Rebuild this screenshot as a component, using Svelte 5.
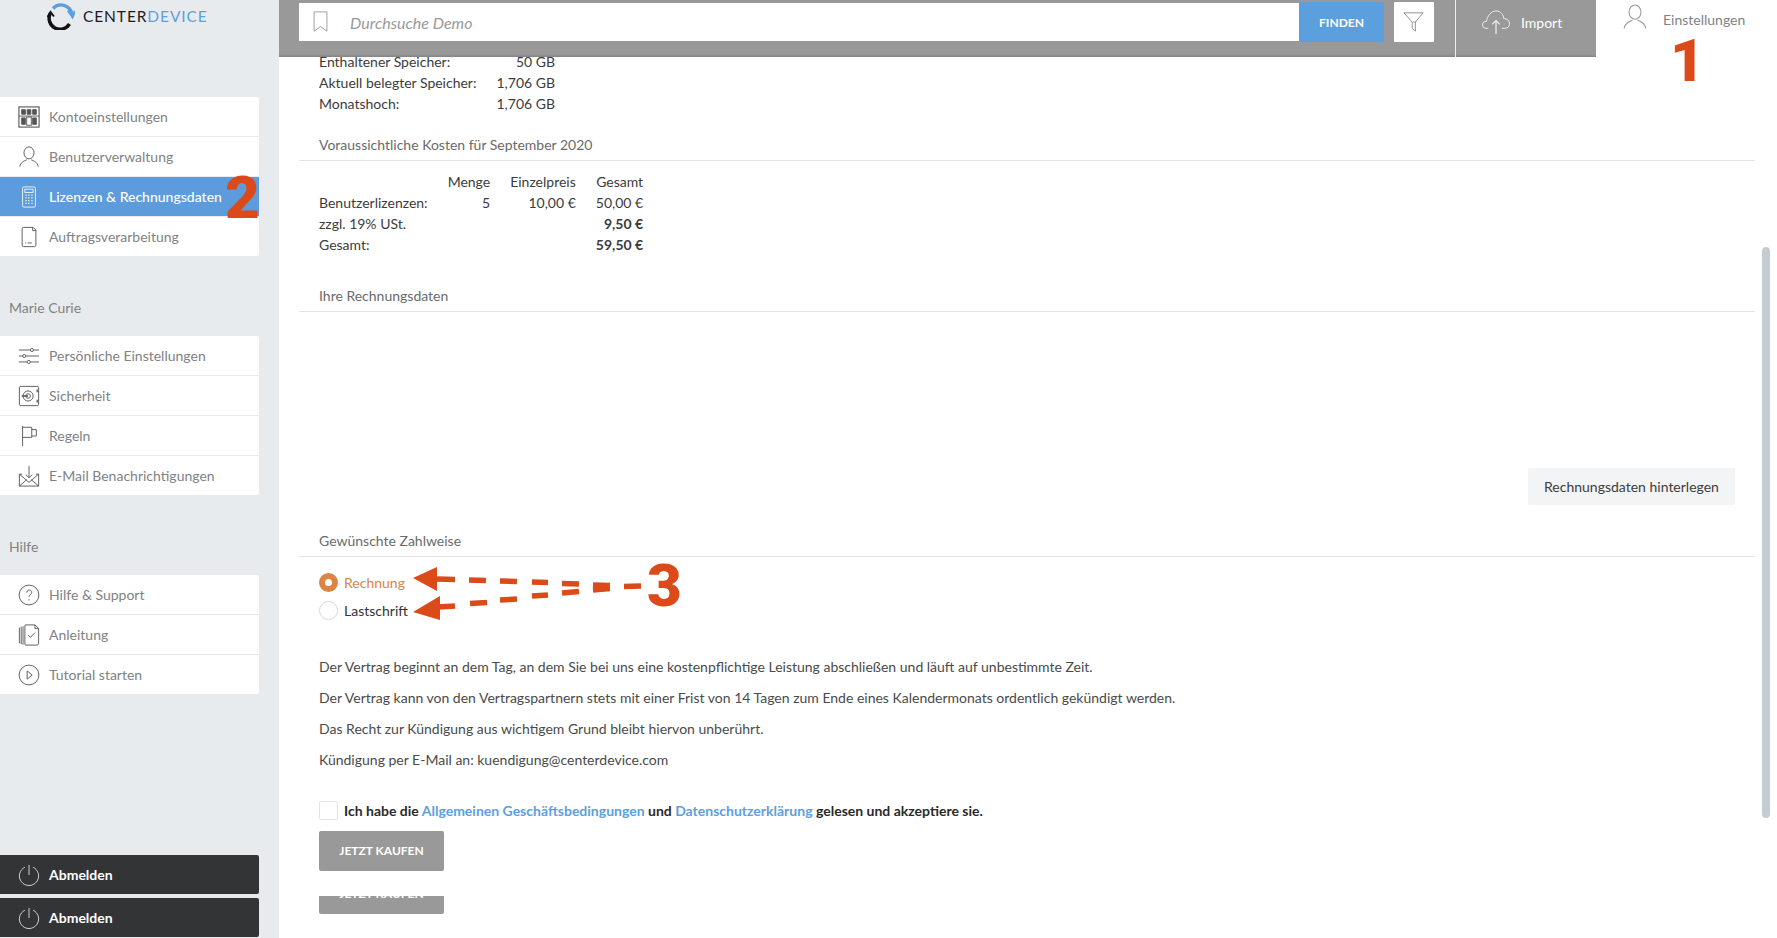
<script>
  const accountItems = [
    { icon: 'account', label: 'Kontoeinstellungen' },
    { icon: 'user', label: 'Benutzerverwaltung' },
    { icon: 'calc', label: 'Lizenzen & Rechnungsdaten', active: true },
    { icon: 'doc', label: 'Auftragsverarbeitung' }
  ];
  const personalItems = [
    { icon: 'sliders', label: 'Persönliche Einstellungen' },
    { icon: 'safe', label: 'Sicherheit' },
    { icon: 'flag', label: 'Regeln' },
    { icon: 'mail', label: 'E-Mail Benachrichtigungen' }
  ];
  const helpItems = [
    { icon: 'help', label: 'Hilfe & Support' },
    { icon: 'guide', label: 'Anleitung' },
    { icon: 'play', label: 'Tutorial starten' }
  ];
  const storage = [
    ['Enthaltener Speicher:', '50 GB'],
    ['Aktuell belegter Speicher:', '1,706 GB'],
    ['Monatshoch:', '1,706 GB']
  ];
  const terms = [
    'Der Vertrag beginnt an dem Tag, an dem Sie bei uns eine kostenpflichtige Leistung abschließen und läuft auf unbestimmte Zeit.',
    'Der Vertrag kann von den Vertragspartnern stets mit einer Frist von 14 Tagen zum Ende eines Kalendermonats ordentlich gekündigt werden.',
    'Das Recht zur Kündigung aus wichtigem Grund bleibt hiervon unberührt.',
    'Kündigung per E-Mail an: kuendigung@centerdevice.com'
  ];
</script>

{#snippet icon(name)}
  <svg class="icon" viewBox="0 0 24 24" fill="none" stroke="currentColor" stroke-width="1">
    {#if name === 'account'}
      <rect x="1" y="1" width="22" height="22" stroke-width="1.2" />
      <path d="M4 4h4v5H4zM10 4h4v5h-4zM16 4h4v5h-4zM4 13h4v7H4zM16 13h4v7h-4z" fill="currentColor" />
      <path d="M1 11h22" />
      <rect x="9.500" y="12" width="5" height="9" />
    {:else if name === 'user' || name === 'userTop'}
      <ellipse cx="12" cy="7.500" rx="5.500" ry="6.500" />
      <path d="M2 22.500c.6-5 5-6.200 7.600-7.500M22 22.500c-.6-5-5-6.200-7.600-7.500" />
    {:else if name === 'calc'}
      <rect x="5" y="1" width="14" height="22" rx="1.500" />
      <rect x="7.500" y="3.500" width="9" height="3.500" />
      <path d="M8 10h1.500M11 10h1.500M14.500 10h1.500M8 13h1.500M11 13h1.500M14.500 13h1.500M8 16h1.500M11 16h1.500M14.500 16h1.500M8 19h1.500M11 19h1.500M14.500 19h1.500" stroke-width="1.400" />
    {:else if name === 'doc'}
      <path d="M6 1.500h10.500l3 3V21a1.500 1.500 0 0 1-1.500 1.500H6A1.500 1.500 0 0 1 4.500 21V3A1.500 1.500 0 0 1 6 1.500z" />
      <path d="M16 1.500v3.500h3.500M8 18.500h1M10.500 18.500h4.500" />
    {:else if name === 'sliders'}
      <path d="M1 5.500h12.500M17 5.500h6M1 12h4M8.500 12h14.500M1 18.500h9M13.500 18.500h9.500" />
      <circle cx="15.200" cy="5.500" r="1.700" />
      <circle cx="6.800" cy="12" r="1.700" />
      <circle cx="11.800" cy="18.500" r="1.700" />
    {:else if name === 'safe'}
      <rect x="1.500" y="1.500" width="21" height="21" rx="1.500" />
      <circle cx="11" cy="12" r="5.500" />
      <circle cx="11" cy="12" r="2.500" />
      <path d="M4 12h7M21 5v3M21 16v3" stroke-width="1.400" />
    {:else if name === 'flag'}
      <path d="M5 1v22M5 2.500h10v11H5M15 5h5v7h-5" />
    {:else if name === 'mail'}
      <path d="M1.500 10v13h21V10M1.500 10h3M22.500 10h-3M1.500 23l8-7M22.500 23l-8-7M1.500 10l10.500 9 10.500-9" />
      <path d="M12 1v13M8.500 10.500l3.500 3.500 3.500-3.500" />
    {:else if name === 'help'}
      <circle cx="12" cy="12" r="10.800" />
      <path d="M9.500 9.500c0-4 5.500-3.500 5.500-.5 0 2.500-3 2.500-3 5M12 16.500v1.500" />
    {:else if name === 'guide'}
      <path d="M1.500 4v17M3.500 3v19M5.500 2.500v20" />
      <path d="M8.500 1h10l4 4v16a2 2 0 0 1-2 2h-12a1 1 0 0 1-1-1V2a1 1 0 0 1 1-1z" />
      <path d="M18.500 1v4h4M11 12l2.500 2.500 5-5" />
    {:else if name === 'play'}
      <circle cx="12" cy="12" r="10.800" />
      <path d="M10 7.500v9l5.500-4.500z" />
    {:else if name === 'power'}
      <path d="M7.500 3.500a10.500 10.500 0 1 0 9 0M12 1v11" />
    {/if}
  </svg>
{/snippet}

{#snippet menu(items)}
  <ul class="menu">
    {#each items as item}
      <li class:active={item.active}>
        {@render icon(item.icon)}
        <span>{item.label}</span>
      </li>
    {/each}
  </ul>
{/snippet}

<div class="page">
  <aside class="sidebar">
    <div class="logo">
      <svg viewBox="0 0 28 28" width="28" height="28" fill="none" stroke-width="3.400">
        <path d="M6 6.500A11 11 0 0 1 25 13" stroke="#5c9fdf" />
        <path d="M21 8.500l4.500 6.500 2.500-6" stroke="#5c9fdf" stroke-width="2.400" />
        <path d="M3.200 11.500A11 11 0 0 0 22.500 22" stroke="#111" />
        <path d="M.5 15l3-5 3.500 4.500" stroke="#111" stroke-width="2" />
      </svg>
      <span class="logo-text">CENTER<b>DEVICE</b></span>
    </div>

    {@render menu(accountItems)}
    <h3>Marie Curie</h3>
    {@render menu(personalItems)}
    <h3>Hilfe</h3>
    {@render menu(helpItems)}

    <div class="logout-stack">
      <button class="logout">{@render icon('power')}<span>Abmelden</span></button>
      <button class="logout">{@render icon('power')}<span>Abmelden</span></button>
    </div>
  </aside>

  <div class="main">
    <header class="topbar">
      <div class="searchbar">
        <div class="search-input">
          <svg viewBox="0 0 16 24" width="15" height="22" fill="none" stroke="#999" stroke-width="1"><path d="M1 1h14v21l-7-5-7 5z" /></svg>
          <em>Durchsuche Demo</em>
        </div>
        <button class="find">FINDEN</button>
        <button class="filter" aria-label="Filter">
          <svg viewBox="0 0 24 24" width="22" height="22" fill="none" stroke="#8a8a8a" stroke-width="1"><path d="M1 2h21l-8.500 10v10l-3.500-3v-7zM11 12h2.500" /></svg>
        </button>
      </div>
      <div class="import">
        <svg viewBox="0 0 30 26" width="30" height="25" fill="none" stroke="#eee" stroke-width="1"><path d="M7 19H4.500C1.500 19 .5 16.500 1 14.500c.5-2 2.500-3 4-2.500C6 6 10 1 15 1c5 0 8 4 8 8 3.500 0 6.500 2 6 6-.3 2.500-2 4-5 4h-3" /><path d="M15 25V11M11 15l4-4 4 4" stroke-width="1.300" /></svg>
        <span>Import</span>
      </div>
      <div class="settings-link">
        {@render icon('userTop')}
        <span>Einstellungen</span>
      </div>
    </header>

    <div class="content">
      <table class="storage">
        <tbody>
          {#each storage as row}
            <tr><td>{row[0]}</td><td class="num">{row[1]}</td></tr>
          {/each}
        </tbody>
      </table>

      <h4 class="costs-title">Voraussichtliche Kosten für September 2020</h4>
      <table class="costs">
        <tbody>
          <tr><td></td><td class="num">Menge</td><td class="num">Einzelpreis</td><td class="num">Gesamt</td></tr>
          <tr><td>Benutzerlizenzen:</td><td class="num">5</td><td class="num">10,00 €</td><td class="num">50,00 €</td></tr>
          <tr><td>zzgl. 19% USt.</td><td></td><td></td><td class="num strong">9,50 €</td></tr>
          <tr><td>Gesamt:</td><td></td><td></td><td class="num strong">59,50 €</td></tr>
        </tbody>
      </table>

      <h4 class="billing-title">Ihre Rechnungsdaten</h4>
      <div class="billing-actions">
        <button class="secondary">Rechnungsdaten hinterlegen</button>
      </div>

      <h4 class="pay-title">Gewünschte Zahlweise</h4>
      <div class="radios">
        <label class="radio selected"><span class="dot"></span>Rechnung</label>
        <label class="radio"><span class="dot"></span>Lastschrift</label>
      </div>

      <div class="terms">
        {#each terms as line}
          <p>{line}</p>
        {/each}
      </div>

      <div class="agree">
        <span class="checkbox"></span>
        <span>Ich habe die <a href="#agb">Allgemeinen Geschäftsbedingungen</a> und <a href="#privacy">Datenschutzerklärung</a> gelesen und akzeptiere sie.</span>
      </div>
      <button class="buy">JETZT KAUFEN</button>
      <div class="buy-cut"><button class="buy">JETZT KAUFEN</button></div>
    </div>

    <div class="scrollbar"></div>
  </div>

  <div class="mark mark-1">1</div>
  <div class="mark mark-2">2</div>
  <div class="mark mark-3">3</div>
  <svg class="arrows" viewBox="0 0 240 60" width="240" height="60" fill="#dd4a1a" stroke="#dd4a1a">
    <path d="M0 13L24 2v24z" stroke="none" />
    <path d="M0 47l27-16v24z" stroke="none" />
    <path d="M24 14l18 .5M56 15l17 .5M87 16l17 .5M119 17l16 .5M149 18.500l17 .5M180 20l17 .500M211 21.500l17-.5" stroke-width="5.500" />
    <path d="M25 42l17-1M57 38.500l17-1M87 35l17-1M119 31l16-1M149 28l17-1.500M180 25l17-1.500" stroke-width="5.500" />
  </svg>
</div>

<style>
  :global(body) {
    margin: 0;
    font-family: Lato, "Open Sans", sans-serif;
    color: #333;
    background: #fff;
  }

  .page {
    position: relative;
    display: flex;
    height: 938px;
    overflow: hidden;
    font-size: 14px;
  }

  .sidebar {
    width: 279px;
    flex: none;
    display: flex;
    flex-direction: column;
    background: #e8ebee;
    padding-right: 20px;
    box-sizing: border-box;
    color: #808284;
  }

  .logo {
    display: flex;
    align-items: flex-start;
    gap: 8px;
    height: 97px;
    padding: 2px 0 0 47px;
    box-sizing: border-box;
  }

  .logo-text {
    font-size: 15.5px;
    letter-spacing: 0.9px;
    color: #1c1c1c;
    line-height: 30px;
    margin-top: -1px;
  }

  .logo-text b {
    font-weight: 400;
    color: #5c9fdf;
  }

  .menu {
    list-style: none;
    margin: 0;
    padding: 0;
    display: flex;
    flex-direction: column;
    gap: 1px;
    border-radius: 0 2px 2px 0;
    overflow: hidden;
  }

  .menu li {
    display: flex;
    align-items: center;
    gap: 9px;
    height: 39px;
    padding-left: 18px;
    background: #fff;
    color: #808284;
  }

  .menu li.active {
    background: #5c9cdc;
    color: #fff;
    font-weight: 500;
  }

  .icon {
    width: 22px;
    height: 22px;
    flex: none;
    color: #555;
  }

  .active .icon {
    color: #eef5fb;
  }

  h3 {
    margin: 0;
    height: 80px;
    padding: 42px 0 0 9px;
    box-sizing: border-box;
    font-size: 14px;
    font-weight: 400;
    line-height: 20px;
  }

  .logout-stack {
    margin-top: auto;
    display: flex;
    flex-direction: column;
    gap: 4px;
    padding-bottom: 1px;
  }

  .logout {
    display: flex;
    align-items: center;
    gap: 9px;
    height: 39px;
    padding: 0 0 0 18px;
    border: none;
    border-radius: 0 2px 2px 0;
    background: #333436;
    color: #fff;
    font: 700 14px Lato, sans-serif;
  }

  .logout .icon {
    color: #ddd;
  }

  .main {
    position: relative;
    flex: 1;
    min-width: 0;
    display: flex;
    flex-direction: column;
  }

  .topbar {
    display: flex;
    height: 57px;
    flex: none;
  }

  .searchbar {
    flex: 1;
    display: flex;
    padding: 2px 0 0 20px;
    background: #999;
    box-shadow: inset 0 -3px 3px -2px rgba(0, 0, 0, 0.18);
    box-sizing: border-box;
  }

  .search-input {
    flex: 1;
    height: 38px;
    margin-top: 1px;
    display: flex;
    align-items: center;
    gap: 22px;
    padding-left: 14px;
    background: #fff;
    color: #9a9a9a;
  }

  .search-input em {
    font-size: 16px;
  }

  .find {
    width: 85px;
    height: 40px;
    border: none;
    border-radius: 1px;
    background: #5c9fdf;
    color: #fff;
    font: 700 12px Lato, sans-serif;
  }

  .filter {
    width: 40px;
    height: 40px;
    margin: 0 21px 0 10px;
    padding: 0;
    border: none;
    border-radius: 1px;
    background: #fff;
    display: flex;
    align-items: center;
    justify-content: center;
  }

  .import {
    width: 141px;
    flex: none;
    display: flex;
    align-items: center;
    gap: 10px;
    padding: 0 0 13px 25px;
    box-sizing: border-box;
    background: #999;
    border-left: 1px solid #eee;
    box-shadow: inset 0 -3px 3px -2px rgba(0, 0, 0, 0.18);
    color: #fff;
  }

  .settings-link {
    width: 181px;
    flex: none;
    display: flex;
    align-items: flex-start;
    gap: 15px;
    padding: 4px 0 0 26px;
    box-sizing: border-box;
    color: #808284;
    line-height: 32px;
  }

  .settings-link .icon {
    width: 26px;
    height: 26px;
    color: #999;
  }

  .content {
    flex: 1;
    padding: 0 22px 0 20px;
  }

  table {
    border-collapse: collapse;
    margin-left: 20px;
    color: #3c3c3c;
  }

  td {
    padding: 0;
    height: 21px;
    line-height: 21px;
  }

  .num {
    text-align: right;
  }

  .storage {
    margin-top: -6px;
  }

  .storage .num {
    padding-left: 20px;
  }

  .costs .num {
    padding-left: 20px;
  }

  .strong {
    font-weight: 700;
  }

  h4 {
    margin: 0;
    padding: 0 0 5px 20px;
    border-bottom: 1px solid #e1e4e8;
    font-size: 14px;
    font-weight: 400;
    line-height: 20px;
    color: #6a6a6a;
  }

  .costs-title {
    margin-top: 21px;
  }

  .costs {
    margin-top: 10px;
  }

  .billing-title {
    margin-top: 31px;
  }

  .billing-actions {
    display: flex;
    justify-content: flex-end;
    padding: 156px 20px 0 0;
  }

  .secondary {
    width: 207px;
    height: 37px;
    border: none;
    border-radius: 2px;
    background: #f3f4f5;
    color: #3c3c3c;
    font: 14px Lato, sans-serif;
  }

  .pay-title {
    margin-top: 26px;
  }

  .radios {
    display: flex;
    flex-direction: column;
    gap: 8px;
    padding: 15px 0 0 20px;
  }

  .radio {
    display: flex;
    align-items: center;
    gap: 6px;
    height: 20px;
  }

  .dot {
    width: 19px;
    height: 19px;
    border: 1px solid #ddd8d4;
    border-radius: 50%;
    box-sizing: border-box;
    background: #fff;
  }

  .selected {
    color: #dd8444;
  }

  .selected .dot {
    border: 6px solid #dd8444;
  }

  .terms {
    padding: 37px 0 0 20px;
    color: #4a4a4a;
  }

  .terms p {
    margin: 0 0 11px;
    line-height: 20px;
  }

  .agree {
    display: flex;
    align-items: center;
    gap: 6px;
    margin-top: 30px;
    padding-left: 20px;
    font-weight: 700;
    color: #2a2a2a;
    height: 20px;
  }

  .agree a {
    color: #5c9fdf;
    text-decoration: none;
  }

  .checkbox {
    width: 19px;
    height: 19px;
    border: 1px solid #e3e3e3;
    border-radius: 2px;
    box-sizing: border-box;
  }

  .buy {
    display: block;
    width: 125px;
    height: 40px;
    margin: 11px 0 0 20px;
    padding: 0 0 2px;
    border: none;
    border-radius: 2px;
    background: #999;
    color: #fff;
    font: 700 12px Lato, sans-serif;
  }

  .buy-cut {
    height: 18px;
    margin-top: 25px;
    overflow: hidden;
    position: relative;
  }

  .buy-cut .buy {
    margin-top: -22px;
  }

  .scrollbar {
    position: absolute;
    top: 247px;
    right: 7px;
    width: 8px;
    height: 571px;
    border-radius: 4px;
    background: #c5cdd2;
  }

  .mark {
    position: absolute;
    color: #dd4a1a;
    font: 900 60px Roboto, "Liberation Sans", sans-serif;
    line-height: 60px;
  }

  .mark-1 {
    left: 1670px;
    top: 31px;
  }

  .mark-2 {
    left: 225px;
    top: 168px;
  }

  .mark-3 {
    left: 647px;
    top: 556px;
  }

  .arrows {
    position: absolute;
    left: 413px;
    top: 565px;
  }
</style>
